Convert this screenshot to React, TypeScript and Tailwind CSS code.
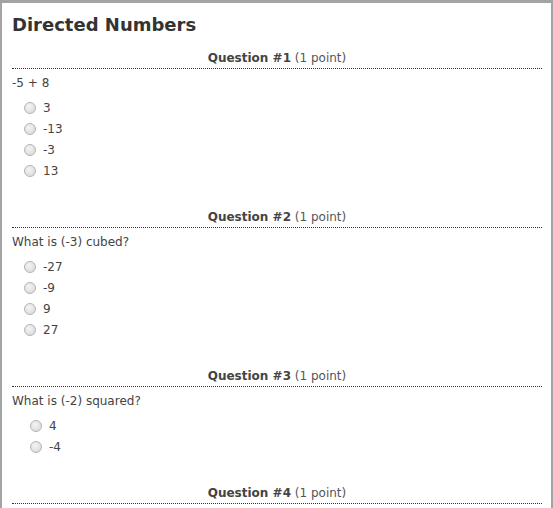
import React from 'react';

type Question = {
  num: number;
  text: string;
  options: string[];
  indent?: boolean;
};

const questions: Question[] = [
  { num: 1, text: '-5 + 8', options: ['3', '-13', '-3', '13'] },
  { num: 2, text: 'What is (-3) cubed?', options: ['-27', '-9', '9', '27'] },
  { num: 3, text: 'What is (-2) squared?', options: ['4', '-4'], indent: true },
  { num: 4, text: '', options: [] },
];

function Radio() {
  return (
    <span className="inline-block w-[12px] h-[12px] rounded-full border border-[#b4b4b4] bg-[radial-gradient(circle_at_40%_35%,#f4f4f4,#d6d6d6)] shrink-0" />
  );
}

function QuestionBlock({ q }: { q: Question }) {
  return (
    <div className="mt-[13px] pb-[15px]">
      <div className="text-center text-[12px] leading-[16px] text-[#444] pb-[2px] border-b border-dotted border-[#333]">
        <span className="font-bold">Question #{q.num}</span> <span className="text-[#555]">(1 point)</span>
      </div>
      {q.text && (
        <div className="mt-[6px] text-[12px] leading-[16px] text-[#444]">{q.text}</div>
      )}
      {q.options.length > 0 && (
        <div className={q.indent ? 'mt-[6px] pl-[18px]' : 'mt-[6px] pl-[12px]'}>
          {q.options.map(opt => (
            <label key={opt} className="flex items-center gap-[7px] h-[21px] text-[12px] text-[#444]">
              <Radio />
              <span>{opt}</span>
            </label>
          ))}
        </div>
      )}
    </div>
  );
}

export default function App() {
  return (
    <div
      className="w-[553px] h-[508px] overflow-hidden bg-white border-t-[3px] border-x-2 border-[#a3a3a3]"
      style={{ fontFamily: '"DejaVu Sans", Verdana, sans-serif' }}
    >
      <div className="pl-[10px] pr-[9px]">
        <h1 className="mt-[10px] text-[18px] leading-[24px] font-bold text-[#333]">Directed Numbers</h1>
        {questions.map(q => (
          <QuestionBlock key={q.num} q={q} />
        ))}
      </div>
    </div>
  );
}
